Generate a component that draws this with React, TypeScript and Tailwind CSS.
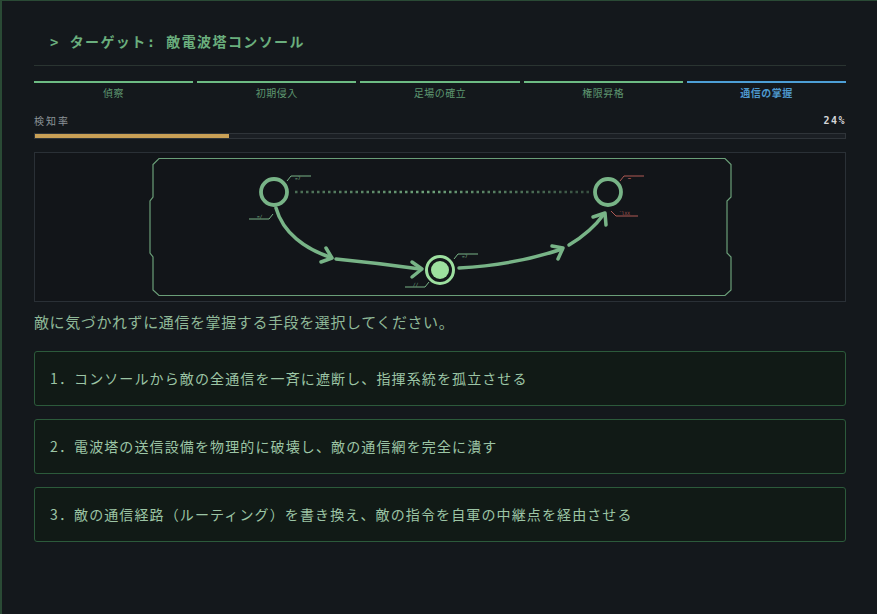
import React from "react";

const steps = [
  { label: "偵察", active: false },
  { label: "初期侵入", active: false },
  { label: "足場の確立", active: false },
  { label: "権限昇格", active: false },
  { label: "通信の掌握", active: true },
];

const options = [
  "1．コンソールから敵の全通信を一斉に遮断し、指揮系統を孤立させる",
  "2．電波塔の送信設備を物理的に破壊し、敵の通信網を完全に潰す",
  "3．敵の通信経路（ルーティング）を書き換え、敵の指令を自軍の中継点を経由させる",
];

const detection = 24;

function Tag({ x, y, flip, color, text }: { x: number; y: number; flip?: boolean; color: string; text: string }) {
  // tiny HUD callout next to a node
  const pts = flip
    ? `${x},${y} ${x + 20},${y} ${x + 24},${y - 5}`
    : `${x},${y} ${x + 4},${y - 5} ${x + 24},${y - 5}`;
  return (
    <g>
      <polyline points={pts} fill="none" stroke={color} strokeWidth="1" />
      <text
        x={x + 8}
        y={flip ? y - 1.2 : y - 0.8}
        fontSize="4.5"
        fill={color}
        fontFamily="DejaVu Sans Mono, monospace"
      >
        {text}
      </text>
    </g>
  );
}

function Diagram() {
  const g = "#78b487";
  return (
    <svg width="810" height="148" viewBox="0 0 810 148" className="block">
      <defs>
        <linearGradient id="dots" gradientUnits="userSpaceOnUse" x1="260" x2="556" y1="0" y2="0">
          <stop offset="0" stopColor="#5d8a68" stopOpacity="0.75" />
          <stop offset="0.45" stopColor="#6fa47b" stopOpacity="1" />
          <stop offset="1" stopColor="#5d8a68" stopOpacity="0.5" />
        </linearGradient>
      </defs>
      <path
        d="M124 5.5 L690 5.5 L696 11.5 L696 44 L692 48 L692 100 L696 104 L696 137 L690 142.5 L124 142.5 L118 137 L118 104 L115 100 L115 48 L118 44 L118 11.5 Z"
        fill="none"
        stroke="#6a9e78"
        strokeWidth="1.2"
      />
      <line x1="260" y1="39" x2="556" y2="39" stroke="url(#dots)" strokeWidth="2.5" strokeDasharray="2.5 3" />

      <g fill="none" stroke={g} strokeWidth="3.5" strokeLinecap="round" strokeLinejoin="round">
        <path d="M241 55 C248 80 270 96 296 104.5" />
        <polyline points="291,95 297,105 286,109" />
        <path d="M301 106 Q342 110 385 116" />
        <polyline points="377,109 387,116 377,124" />
        <path d="M424 115 Q480 112 527 96" />
        <polyline points="517,93 528,95 523,106" />
        <path d="M534 92 Q556 79 569 61" />
        <polyline points="558,64 570,60 571,72" />
      </g>

      <circle cx="239" cy="39" r="13" fill="none" stroke={g} strokeWidth="3.8" />
      <circle cx="573" cy="39" r="13" fill="none" stroke={g} strokeWidth="3.8" />
      <circle cx="405" cy="117" r="13.5" fill="#13171b" stroke="#9ddf9f" strokeWidth="3" />
      <circle cx="405" cy="117" r="9" fill="#9ddf9f" />

      <Tag x={252} y={28} color={g} text="=7" />
      <Tag x={214} y={66} flip color={g} text="=/" />
      <Tag x={585} y={28} color="#b05a55" text="━" />
      <polyline points="576,58 581,63 603,63" fill="none" stroke="#b05a55" strokeWidth="1" />
      <text x="584" y="61.8" fontSize="4.5" fill="#b05a55" fontFamily="DejaVu Sans Mono, monospace">
        ¯lXX
      </text>
      <Tag x={419} y={106} color={g} text="=7" />
      <Tag x={370} y={134} flip color={g} text="//" />
    </svg>
  );
}

export default function App() {
  return (
    <div className="w-[877px] h-[614px] overflow-hidden bg-[#14181b]">
      <div
        className="h-full border-l-2 border-t border-[#2a4a35] bg-[#14181c] pl-[32px] pr-[31px] pt-[31px]"
        style={{ fontFamily: '"Noto Sans CJK JP", "Noto Sans", sans-serif' }}
      >
        {/* header */}
        <div className="border-b border-[#2a3431] pl-4 pb-[13px]">
          <h1
            className="text-[14px] leading-[20px] font-bold tracking-[0.1em] text-[#6aae7d]"
            style={{ fontFamily: '"DejaVu Sans Mono", "Noto Sans CJK JP", monospace' }}
          >
            &gt; ターゲット: 敵電波塔コンソール
          </h1>
        </div>

        {/* phases */}
        <div className="mt-[15px] grid grid-cols-5 gap-[4px]">
          {steps.map((s) => (
            <div key={s.label} className="flex flex-col items-center">
              <div className={`h-[2px] w-full ${s.active ? "bg-[#4d9fd6]" : "bg-[#6dbb83]"}`} />
              <span
                className={`mt-[4px] text-[10px] leading-[12px] tracking-[0.05em] ${
                  s.active ? "font-bold text-[#4d97cc]" : "text-[#5d9670]"
                }`}
              >
                {s.label}
              </span>
            </div>
          ))}
        </div>

        {/* detection meter */}
        <div className="mt-[15px] flex items-center justify-between text-[10px] leading-[14px]">
          <span className="tracking-[0.2em] text-[#8c9499]">検知率</span>
          <span
            className="font-bold tracking-[0.15em] text-[#d4d6d8]"
            style={{ fontFamily: '"DejaVu Sans Mono", monospace' }}
          >
            {detection}%
          </span>
        </div>
        <div className="mt-[5px] h-[6px] border border-[#2f3439] bg-[#1b1f24]">
          <div className="h-full bg-[#c9a056]" style={{ width: `${detection}%` }} />
        </div>

        {/* diagram */}
        <div className="mt-[13px] h-[150px] border border-[#2a3036] bg-[#121519]">
          <Diagram />
        </div>

        <p className="mt-[9px] text-[15px] leading-[22px] tracking-[0.04em] text-[#8fb898]">
          敵に気づかれずに通信を掌握する手段を選択してください。
        </p>

        <div className="mt-[18px] flex flex-col gap-[13px]">
          {options.map((o) => (
            <button
              key={o}
              className="flex h-[55px] items-center rounded-[3px] border border-[#2c5a3b] bg-[#111a16] pl-[15px] text-left text-[14px] tracking-[0.08em] text-[#9cc5a5]"
            >
              {o}
            </button>
          ))}
        </div>
      </div>
    </div>
  );
}
